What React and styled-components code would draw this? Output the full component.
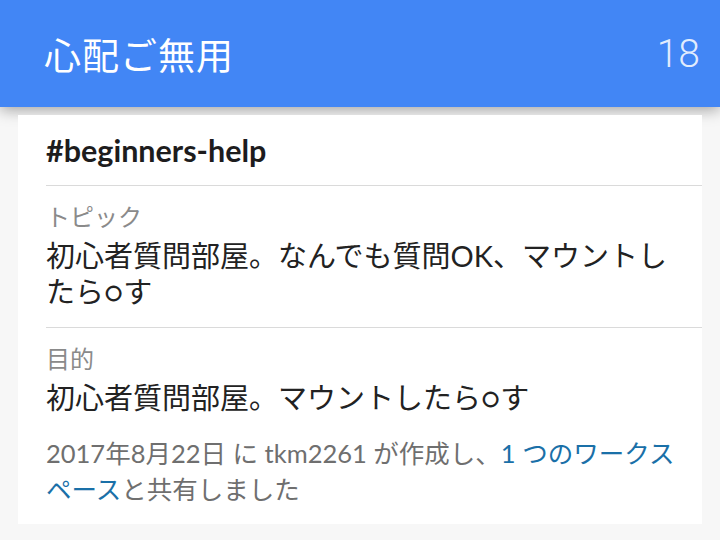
import styled, { createGlobalStyle } from 'styled-components';

const GlobalStyle = createGlobalStyle`
  html, body {
    margin: 0;
    padding: 0;
    background: #f7f7f7;
  }
  body {
    font-family: Lato, "Noto Sans CJK JP", sans-serif;
  }
`;

const Page = styled.div`
  width: 720px;
  height: 540px;
  overflow: hidden;
  background: #f7f7f7;
`;

const AppBar = styled.header`
  position: relative;
  height: 107px;
  display: flex;
  align-items: center;
  justify-content: space-between;
  padding: 0 20px 0 44px;
  background: #4286f5;
  box-shadow: 0 3px 14px rgba(0, 0, 0, 0.35);
`;

const AppTitle = styled.h1`
  margin: 0;
  font-family: "Noto Sans CJK JP", sans-serif;
  font-weight: 400;
  font-size: 37px;
  color: #ffffff;
  letter-spacing: 1px;
`;

const Count = styled.span`
  font-family: Roboto, sans-serif;
  font-weight: 300;
  font-size: 39px;
  color: rgba(255, 255, 255, 0.85);
`;

const Card = styled.main`
  position: relative;
  z-index: 1;
  margin: 8px 18px 0;
  background: #ffffff;
`;

const Section = styled.section`
  margin-left: 28px;
  padding: ${({ pad }) => pad || '14px 28px 17px 0'};
  border-bottom: ${({ last }) => (last ? 'none' : '1px solid #dadada')};
`;

const ChannelName = styled.h2`
  margin: 0;
  height: 70px;
  display: flex;
  align-items: center;
  font-family: Lato, sans-serif;
  font-weight: 700;
  font-size: 30.5px;
  color: #1d1c1d;
`;

const Label = styled.div`
  font-family: "Noto Sans CJK JP", sans-serif;
  font-size: 24px;
  line-height: 32px;
  color: #8a8a8a;
  margin-bottom: 6px;
`;

const Body = styled.div`
  font-family: Lato, "Noto Sans CJK JP", sans-serif;
  font-size: 29px;
  line-height: 36px;
  color: #222222;
`;

const Meta = styled.p`
  margin: 19px 0 0;
  font-family: Lato, "Noto Sans CJK JP", sans-serif;
  font-size: 25.5px;
  line-height: 36px;
  color: #6f6f6f;
`;

const Link = styled.a`
  color: #1a70a8;
  text-decoration: none;
`;

function App() {
  return (
    <Page>
      <GlobalStyle />
      <AppBar>
        <AppTitle>心配ご無用</AppTitle>
        <Count>18</Count>
      </AppBar>
      <Card>
        <Section pad="0 28px 0 0">
          <ChannelName>#beginners-help</ChannelName>
        </Section>
        <Section>
          <Label>トピック</Label>
          <Body>初心者質問部屋。なんでも質問OK、マウントしたら○す</Body>
        </Section>
        <Section last pad="14px 20px 17px 0">
          <Label>目的</Label>
          <Body>初心者質問部屋。マウントしたら○す</Body>
          <Meta>
            2017年8月22日 に tkm2261 が作成し、<Link href="#">1 つのワークスペース</Link>と共有しました
          </Meta>
        </Section>
      </Card>
    </Page>
  );
}

export default App;
